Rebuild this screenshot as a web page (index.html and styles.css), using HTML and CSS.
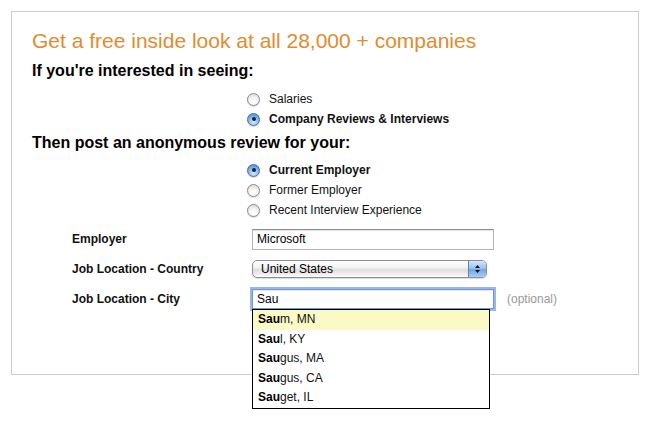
FILE: index.html
```html
<!DOCTYPE html>
<html>
<head>
<meta charset="utf-8">
<title>Free inside look</title>
<link rel="stylesheet" href="styles.css">
</head>
<body>
<div class="panel">
  <h1 class="title">Get a free inside look at all 28,000 + companies</h1>
  <h2 class="question">If you're interested in seeing:</h2>
  <div class="options">
    <label class="option"><input class="radio" type="radio" name="see"><span>Salaries</span></label>
    <label class="option strong"><input class="radio" type="radio" name="see" checked><span>Company Reviews &amp; Interviews</span></label>
  </div>
  <h2 class="question q2">Then post an anonymous review for your:</h2>
  <div class="options opt2">
    <label class="option strong"><input class="radio" type="radio" name="for" checked><span>Current Employer</span></label>
    <label class="option"><input class="radio" type="radio" name="for"><span>Former Employer</span></label>
    <label class="option"><input class="radio" type="radio" name="for"><span>Recent Interview Experience</span></label>
  </div>
  <div class="form">
    <div class="row">
      <span class="label">Employer</span>
      <input class="text" type="text" value="Microsoft">
    </div>
    <div class="row">
      <span class="label">Job Location - Country</span>
      <div class="select">
        <span class="select-value">United States</span>
        <span class="select-btn">
          <svg width="7" height="10" viewBox="0 0 7 10"><path d="M3.5 1 L6 4 L1 4 Z" fill="#111"/><path d="M1 6 L6 6 L3.5 9 Z" fill="#111"/></svg>
        </span>
      </div>
    </div>
    <div class="row">
      <span class="label">Job Location - City</span>
      <div class="city">
        <input class="text focus" type="text" value="Sau">
        <ul class="suggest">
          <li class="hl"><b>Sau</b>m, MN</li>
          <li><b>Sau</b>l, KY</li>
          <li><b>Sau</b>gus, MA</li>
          <li><b>Sau</b>gus, CA</li>
          <li><b>Sau</b>get, IL</li>
        </ul>
      </div>
      <span class="hint">(optional)</span>
    </div>
  </div>
</div>
</body>
</html>
```

FILE: styles.css
```css
html, body {
  margin: 0;
  padding: 0;
  background: #fff;
}
html {
  min-height: 100%;
}
body {
  padding: 11px;
  min-height: 427px;
  box-sizing: border-box;
  font-family: "Liberation Sans", Arial, Helvetica, sans-serif;
  color: #000;
}
.panel {
  width: 628px;
  box-sizing: border-box;
  border: 1px solid #cccccc;
  padding: 17px 20px 60px 20px;
}
.title {
  margin: 0;
  font-size: 21px;
  line-height: 24px;
  font-weight: normal;
  color: #e08c30;
}
.question {
  margin: 8px 0 0 0;
  font-size: 16px;
  line-height: 20px;
  font-weight: bold;
}
.question.q2 {
  margin-top: 4px;
}
.options {
  margin: 8px 0 0 215px;
  display: flex;
  flex-direction: column;
}
.options.opt2 {
  margin-top: 7px;
}
.option {
  display: flex;
  align-items: center;
  height: 20px;
  font-size: 12px;
  line-height: 20px;
  color: #111;
}
.option.strong {
  font-weight: bold;
}
.radio {
  appearance: none;
  -webkit-appearance: none;
  margin: 0 9px 0 0;
  width: 13px;
  height: 13px;
  box-sizing: border-box;
  border-radius: 50%;
  border: 1px solid #8a8a8a;
  background: radial-gradient(circle at 50% 70%, #ffffff 0%, #f4f4f4 45%, #cfcfcf 100%);
  box-shadow: 0 1px 1px rgba(0,0,0,0.15);
  position: relative;
  flex: none;
}
.radio:checked {
  border-color: #4a6a9a;
  background: radial-gradient(circle at 50% 75%, #d6ecff 0%, #8fbdf2 45%, #3f7fd0 100%);
}
.radio:checked::after {
  content: "";
  position: absolute;
  left: 3.5px;
  top: 3.5px;
  width: 4px;
  height: 4px;
  border-radius: 50%;
  background: #14223a;
}
.form {
  margin: 4px 0 0 40px;
  display: flex;
  flex-direction: column;
}
.row {
  display: flex;
  align-items: center;
  height: 30px;
}
.label {
  width: 180px;
  flex: none;
  font-size: 12px;
  font-weight: bold;
  color: #111;
}
.text {
  width: 242px;
  height: 21px;
  box-sizing: border-box;
  margin: 0;
  padding: 0 4px;
  border: 1px solid #b4b4b4;
  border-top-color: #8c8c8c;
  box-shadow: inset 0 1px 1px rgba(0,0,0,0.12);
  font-family: "Liberation Sans", Arial, Helvetica, sans-serif;
  font-size: 12px;
  color: #000;
  background: #fff;
  outline: none;
}
.text.focus {
  height: 20px;
  border: 1px solid #6c98d6;
  box-shadow: 0 0 0 2px rgba(120, 160, 220, 0.75), inset 0 1px 1px rgba(0,0,0,0.1);
}
.select {
  width: 235px;
  height: 18px;
  box-sizing: border-box;
  border: 1px solid #8e8e8e;
  border-radius: 5px;
  display: flex;
  align-items: center;
  overflow: hidden;
  background: linear-gradient(#ffffff 0%, #f3f3f3 40%, #dedede 55%, #ececec 80%, #ffffff 100%);
  box-shadow: 0 1px 1px rgba(0,0,0,0.15);
}
.select-value {
  flex: 1;
  padding-left: 8px;
  font-size: 12px;
  color: #000;
}
.select-btn {
  width: 17px;
  height: 100%;
  display: flex;
  align-items: center;
  justify-content: center;
  border-left: 1px solid #5c7fb6;
  background: linear-gradient(#d2e6fc 0%, #9cc4f2 45%, #6fa4e6 55%, #a9d0fa 100%);
}
.city {
  position: relative;
}
.suggest {
  position: absolute;
  left: 0;
  top: 100%;
  width: 238px;
  box-sizing: border-box;
  margin: 0;
  padding: 0;
  list-style: none;
  border: 1px solid #000;
  background: #fff;
  z-index: 2;
}
.suggest li {
  height: 19.6px;
  line-height: 19.6px;
  padding-left: 5px;
  font-size: 12px;
  color: #111;
}
.suggest li b {
  color: #000;
}
.suggest li.hl {
  background: #fafac6;
}
.hint {
  margin-left: 13px;
  font-size: 12px;
  color: #999999;
}
```
